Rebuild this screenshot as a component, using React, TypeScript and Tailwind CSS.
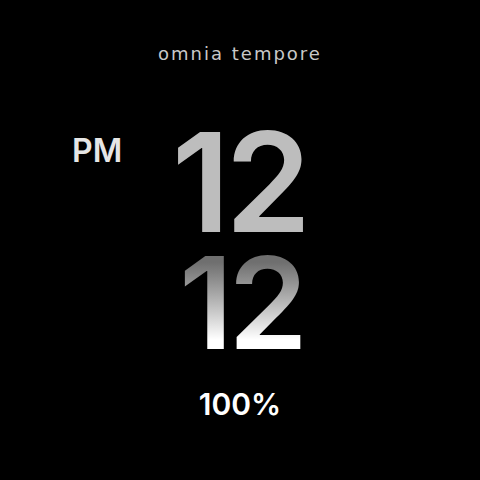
export default function App() {
  return (
    <div className="flex h-[480px] w-[480px] flex-col items-center bg-black font-['Inter',sans-serif]">
      <div className="mt-[45px] font-['DejaVu_Sans',sans-serif] text-[18px] leading-none tracking-[2px] text-[#c8c8c8]">
        omnia tempore
      </div>

      <div className="mt-[64px] grid w-full grid-cols-[1fr_auto_1fr]">
        <div className="mt-[8px] pl-[72px] text-[32px] font-semibold leading-none text-[#e6e6e6]">PM</div>
        <div className="pr-[2px] text-[138px] font-semibold leading-[0.8] tracking-[-5px] text-[#bdbdbd]">12</div>
        <div />
      </div>

      <div className="mt-[15px] bg-linear-to-b from-[#6f6f6f] from-10% to-white to-85% bg-clip-text pl-[2px] text-[128px] font-semibold leading-[0.8] tracking-[-5px] text-transparent">
        12
      </div>

      <div className="mt-[34px] text-[30px] font-semibold leading-none text-white">100%</div>
    </div>
  );
}
